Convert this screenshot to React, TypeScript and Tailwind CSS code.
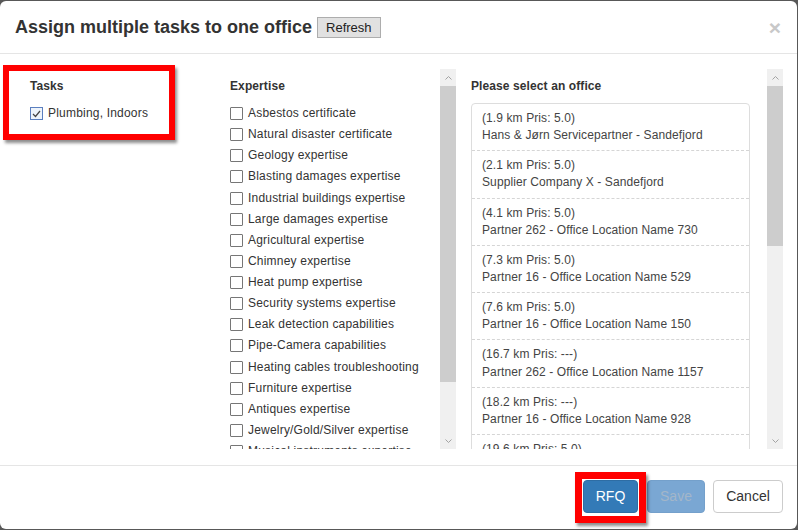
import React from "react";

const expertise = [
    "Asbestos certificate",
    "Natural disaster certificate",
    "Geology expertise",
    "Blasting damages expertise",
    "Industrial buildings expertise",
    "Large damages expertise",
    "Agricultural expertise",
    "Chimney expertise",
    "Heat pump expertise",
    "Security systems expertise",
    "Leak detection capabilities",
    "Pipe-Camera capabilities",
    "Heating cables troubleshooting",
    "Furniture expertise",
    "Antiques expertise",
    "Jewelry/Gold/Silver expertise",
    "Musical instruments expertise",
];

const offices = [
    ["(1.9 km Pris: 5.0)", "Hans & Jørn Servicepartner - Sandefjord"],
    ["(2.1 km Pris: 5.0)", "Supplier Company X - Sandefjord"],
    ["(4.1 km Pris: 5.0)", "Partner 262 - Office Location Name 730"],
    ["(7.3 km Pris: 5.0)", "Partner 16 - Office Location Name 529"],
    ["(7.6 km Pris: 5.0)", "Partner 16 - Office Location Name 150"],
    ["(16.7 km Pris: ---)", "Partner 262 - Office Location Name 1157"],
    ["(18.2 km Pris: ---)", "Partner 16 - Office Location Name 928"],
    ["(19.6 km Pris: 5.0)", "Partner 16 - Office Location Name 311"],
];

function Checkbox({ checked }: { checked?: boolean }) {
    if (checked) {
        return (
            <span className="w-[13px] h-[13px] shrink-0 border border-[#5b7fbf] bg-[#eef4fb] flex items-center justify-center">
                <svg width="9" height="8" viewBox="0 0 9 8">
                    <path d="M1 4 L3.5 6.5 L8 1" fill="none" stroke="#444" strokeWidth="1.2" />
                </svg>
            </span>
        );
    }
    return <span className="w-[13px] h-[13px] shrink-0 border border-[#767676] bg-white rounded-[1px]" />;
}

function Scrollbar({ thumb }: { thumb: string }) {
    return (
        <div className="w-[16px] h-[380px] bg-[#f0f0f0] flex flex-col shrink-0">
            <div className="h-[17px] flex items-center justify-center">
                <svg width="7" height="4" viewBox="0 0 7 4">
                    <path d="M0.5 3.5 L3.5 0.5 L6.5 3.5" fill="none" stroke="#a3a3a3" strokeWidth="1" />
                </svg>
            </div>
            <div className={`bg-[#cdcdcd] ${thumb}`} />
            <div className="flex-1" />
            <div className="h-[17px] flex items-center justify-center">
                <svg width="7" height="4" viewBox="0 0 7 4">
                    <path d="M0.5 0.5 L3.5 3.5 L6.5 0.5" fill="none" stroke="#a3a3a3" strokeWidth="1" />
                </svg>
            </div>
        </div>
    );
}

export default function App() {
    return (
        <div
            className="w-[798px] h-[530px] bg-[#585858] py-px overflow-hidden text-[#333]"
            style={{ fontFamily: '"Liberation Sans", Arial, sans-serif' }}
        >
            <div className="relative w-[797px] h-[528px] bg-white rounded-[6px] flex flex-col">
                <header className="h-[53px] shrink-0 border-b border-[#e5e5e5] px-[15px] flex items-center">
                    <h1 className="text-[18px] font-bold leading-none">Assign multiple tasks to one office</h1>
                    <button className="ml-[5px] h-[21px] px-[8px] text-[13px] leading-none bg-[#e1e1e1] border border-[#adadad] text-[#222]">
                        Refresh
                    </button>
                    <span className="ml-auto text-[21px] font-bold leading-none text-[#c8c8c8] pr-[1px]">×</span>
                </header>

                <div className="h-[411px] shrink-0 flex pl-[15px] pt-[15px] text-[12px] leading-[17px] tracking-[0.1px]">
                    <div className="w-[200px] px-[15px] pt-[9px]">
                        <div className="font-bold h-[17px]">Tasks</div>
                        <div className="mt-[8px] h-[21.125px] flex items-center gap-[5px] tracking-[0.2px]">
                            <Checkbox checked />
                            <span>Plumbing, Indoors</span>
                        </div>
                    </div>

                    <div className="w-[241px] pl-[15px] flex">
                        <div className="flex-1 h-[380px] overflow-hidden pt-[9px]">
                            <div className="font-bold h-[17px]">Expertise</div>
                            <div className="mt-[8px] tracking-[0.2px]">
                                {expertise.map((e) => (
                                    <div key={e} className="h-[21.125px] flex items-center gap-[5px] whitespace-nowrap">
                                        <Checkbox />
                                        <span>{e}</span>
                                    </div>
                                ))}
                            </div>
                        </div>
                        <Scrollbar thumb="h-[296px]" />
                    </div>

                    <div className="w-[327px] pl-[15px] flex">
                        <div className="w-[279px] h-[380px] overflow-hidden pt-[9px]">
                            <div className="font-bold h-[17px]">Please select an office</div>
                            <div className="mt-[8px] border border-[#ddd] rounded-[4px] text-[#444]">
                                {offices.map(([a, b]) => (
                                    <div
                                        key={a}
                                        className="px-[10px] py-[6px] leading-[1.42857] border-b border-dashed border-[#d5d5d5] whitespace-nowrap"
                                    >
                                        <div>{a}</div>
                                        <div>{b}</div>
                                    </div>
                                ))}
                            </div>
                        </div>
                        <div className="w-[17px]" />
                        <Scrollbar thumb="h-[160px]" />
                    </div>
                </div>

                <footer className="flex-1 border-t border-[#e5e5e5] flex items-center justify-end pr-[14px] pb-[2px]">
                    <button className="h-[33px] w-[55px] text-[14px] rounded-[4px] bg-[#337ab7] border border-[#2e6da4] text-white">
                        RFQ
                    </button>
                    <button className="ml-[9px] h-[33px] w-[58px] text-[14px] rounded-[4px] bg-[#7aa7d3] border border-[#74a0cb] text-[#a3b6c9]">
                        Save
                    </button>
                    <button className="ml-[8px] h-[33px] w-[70px] text-[14px] rounded-[4px] bg-white border border-[#ccc] text-[#333]">
                        Cancel
                    </button>
                </footer>

                <div className="absolute left-[3px] top-[64px] w-[172px] h-[75px] border-[6px] border-[#ff0000] shadow-[2px_3px_3px_rgba(0,0,0,0.45)]" />
                <div className="absolute left-[575px] top-[471px] w-[71px] h-[51px] border-[7px] border-[#ff0000] shadow-[2px_3px_3px_rgba(0,0,0,0.45)]" />
            </div>
        </div>
    );
}
